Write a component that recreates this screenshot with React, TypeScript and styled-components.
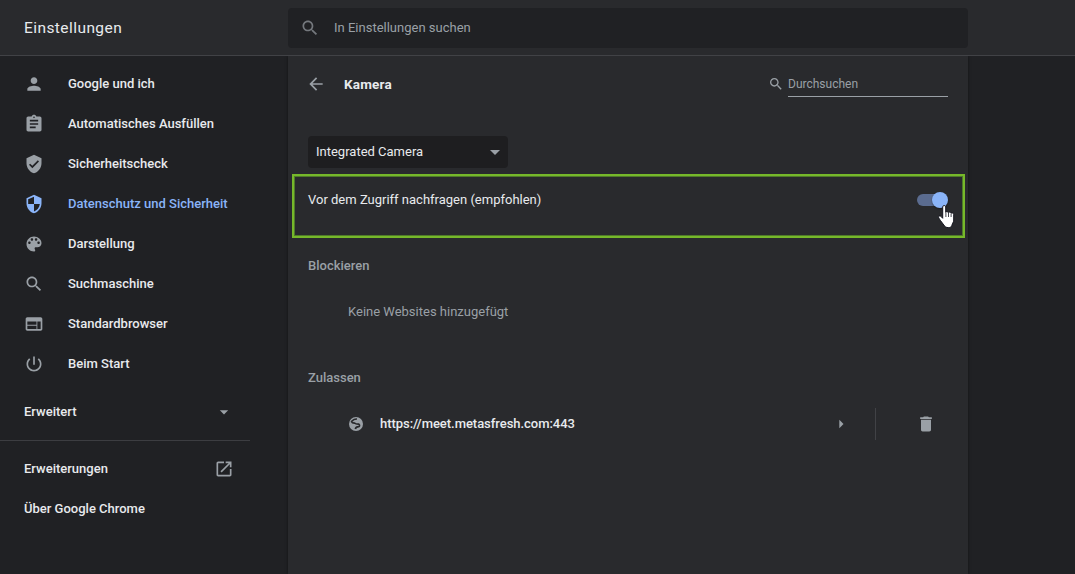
import React from "react";
import styled, { createGlobalStyle } from "styled-components";

const GlobalStyle = createGlobalStyle`
  * { box-sizing: border-box; }
  body {
    margin: 0;
    background: #202124;
    color: #e8eaed;
    font-family: Roboto, "Liberation Sans", sans-serif;
    font-size: 13px;
    line-height: 20px;
    overflow: hidden;
  }
`;

const Page = styled.div`
  display: flex;
  flex-direction: column;
  height: 574px;
  width: 1075px;
`;

const Toolbar = styled.header`
  display: flex;
  align-items: center;
  height: 56px;
  flex: none;
  background: #292a2d;
  border-bottom: 1px solid #414246;
`;

const Title = styled.h1`
  margin: 0;
  width: 288px;
  padding-left: 24px;
  font-size: 15.5px;
  font-weight: 400;
  letter-spacing: 0.43px;
`;

const SearchBox = styled.div`
  display: flex;
  align-items: center;
  width: 680px;
  height: 40px;
  margin-top: 1px;
  padding-left: 12px;
  gap: 14px;
  border-radius: 4px;
  background: #202124;
  color: #9aa0a6;
  svg { color: #74787d; }
`;

const Body = styled.div`
  display: flex;
  flex: 1;
  min-height: 0;
`;

const Sidebar = styled.nav`
  width: 288px;
  padding-top: 8px;
  font-weight: 500;
`;

const NavItem = styled.a<{ $active?: boolean }>`
  display: flex;
  align-items: center;
  height: 40px;
  padding-left: 24px;
  gap: 24px;
  color: ${(p) => (p.$active ? "#8ab4f8" : "#e8eaed")};
  svg { color: ${(p) => (p.$active ? "#8ab4f8" : "#9aa0a6")}; }
`;

const NavFooterItem = styled.a<{ $height: number }>`
  display: flex;
  align-items: center;
  justify-content: space-between;
  width: 234px;
  height: ${(p) => p.$height}px;
  padding-left: 24px;
`;

const NavDivider = styled.div`
  width: 250px;
  height: 1px;
  margin: 0 0 8px;
  background: #3c3d41;
`;

const Panel = styled.main`
  width: 680px;
  background: #292a2d;
  box-shadow: 0 0 3px rgba(0, 0, 0, 0.45);
  clip-path: inset(0 -4px);
`;

const PanelHeader = styled.div`
  display: flex;
  align-items: center;
  height: 56px;
  padding: 0 20px 0 18px;
`;

const PanelTitle = styled.h2`
  flex: 1;
  margin: 0 0 0 18px;
  font-size: 13.5px;
  font-weight: 700;
  letter-spacing: 0.2px;
`;

const FilterField = styled.div`
  width: 160px;
  height: 26px;
  margin-left: 4px;
  padding-top: 3px;
  border-bottom: 1px solid #9aa0a6;
  color: #9aa0a6;
  font-size: 12px;
`;

const Select = styled.div`
  display: flex;
  align-items: center;
  justify-content: space-between;
  width: 200px;
  height: 32px;
  margin: 24px 0 6px 20px;
  padding: 0 1px 0 8px;
  border-radius: 4px;
  background: #1e1e20;
`;

const Highlight = styled.section`
  display: flex;
  align-items: flex-start;
  justify-content: space-between;
  height: 64px;
  margin: 0 3px 0 4px;
  padding: 14px 15px 0 14px;
  border: 2px solid #76b82a;
  box-shadow: inset 0 0 0 1px #4f7a2a;
`;

const Toggle = styled.div`
  position: relative;
  display: flex;
  align-items: center;
  justify-content: flex-end;
  width: 31px;
  height: 16px;
  margin-top: 2px;
`;

const Track = styled.span`
  width: 28px;
  height: 12px;
  margin: 0 -13px 0 0;
  border-radius: 6px;
  background: #5b6c90;
`;

const Knob = styled.span`
  flex: none;
  width: 16px;
  height: 16px;
  z-index: 1;
  border-radius: 50%;
  background: #8ab4f8;
  box-shadow: 0 1px 2px rgba(0, 0, 0, 0.4);
`;

const Pointer = styled.svg`
  position: absolute;
  z-index: 2;
  left: 21px;
  top: 11.5px;
`;

const SectionTitle = styled.h3<{ $top: number }>`
  margin: ${(p) => p.$top}px 0 0 20px;
  font-size: 13px;
  font-weight: 500;
  color: #9aa0a6;
`;

const EmptyNote = styled.p`
  margin: 26px 0 0 60px;
  color: #9aa0a6;
`;

const SiteRow = styled.div`
  display: flex;
  align-items: center;
  height: 48px;
  margin-top: 12px;
  padding: 0 32px 0 60px;
`;

const SiteName = styled.span`
  flex: 1;
  margin-left: 16px;
  font-weight: 500;
  letter-spacing: -0.04px;
`;

const RowDivider = styled.span`
  width: 1px;
  height: 32px;
  margin: 0 40px 0 24px;
  background: #414246;
`;

const paths = {
  person: "M12 12c2.21 0 4-1.79 4-4s-1.79-4-4-4-4 1.79-4 4 1.79 4 4 4zm0 2c-2.67 0-8 1.34-8 4v2h16v-2c0-2.66-5.33-4-8-4z",
  assignment: "M19 3h-4.18C14.4 1.84 13.3 1 12 1c-1.3 0-2.4.84-2.82 2H5c-1.1 0-2 .9-2 2v14c0 1.1.9 2 2 2h14c1.1 0 2-.9 2-2V5c0-1.1-.9-2-2-2zm-7 0c.55 0 1 .45 1 1s-.45 1-1 1-1-.45-1-1 .45-1 1-1zm2 14H7v-2h7v2zm3-4H7v-2h10v2zm0-4H7V7h10v2z",
  verified: "M12 1L3 5v6c0 5.55 3.84 10.74 9 12 5.16-1.26 9-6.45 9-12V5l-9-4zm-2 16l-4-4 1.41-1.41L10 14.17l6.59-6.59L18 9l-8 8z",
  security: "M12 1L3 5v6c0 5.55 3.84 10.74 9 12 5.16-1.26 9-6.45 9-12V5l-9-4zm0 10.99h7c-.53 4.12-3.28 7.79-7 8.94V12H5V6.3l7-3.11v8.8z",
  palette: "M12 3c-4.97 0-9 4.03-9 9s4.03 9 9 9c.83 0 1.5-.67 1.5-1.5 0-.39-.15-.74-.39-1.01-.23-.26-.38-.61-.38-.99 0-.83.67-1.5 1.5-1.5H16c2.76 0 5-2.24 5-5 0-4.42-4.03-8-9-8zm-5.5 9c-.83 0-1.5-.67-1.5-1.5S5.67 9 6.5 9 8 9.67 8 10.5 7.33 12 6.5 12zm3-4C8.67 8 8 7.33 8 6.5S8.67 5 9.5 5s1.5.67 1.5 1.5S10.33 8 9.5 8zm5 0c-.83 0-1.5-.67-1.5-1.5S13.67 5 14.5 5s1.5.67 1.5 1.5S15.33 8 14.5 8zm3 4c-.83 0-1.5-.67-1.5-1.5S16.67 9 17.5 9s1.5.67 1.5 1.5-.67 1.5-1.5 1.5z",
  search: "M15.5 14h-.79l-.28-.27C15.41 12.59 16 11.11 16 9.5 16 5.91 13.09 3 9.5 3S3 5.91 3 9.5 5.91 16 9.5 16c1.61 0 3.09-.59 4.23-1.57l.27.28v.79l5 4.99L20.49 19l-4.99-5zm-6 0C7.01 14 5 11.99 5 9.5S7.01 5 9.5 5 14 7.01 14 9.5 11.99 14 9.5 14z",
  web: "M20 4H4c-1.1 0-1.99.9-1.99 2L2 18c0 1.1.9 2 2 2h16c1.1 0 2-.9 2-2V6c0-1.1-.9-2-2-2zm-5 14H4v-4h11v4zm0-5H4V9h11v4zm5 5h-4V9h4v9z",
  power: "M13 3h-2v10h2V3zm4.83 2.17l-1.42 1.42C17.99 7.86 19 9.81 19 12c0 3.87-3.13 7-7 7s-7-3.13-7-7c0-2.19 1.01-4.14 2.58-5.42L6.17 5.17C4.23 6.82 3 9.26 3 12c0 4.97 4.03 9 9 9s9-4.03 9-9c0-2.74-1.23-5.18-3.17-6.83z",
  down: "M7 10l5 5 5-5z",
  right: "M10 7l5 5-5 5z",
  launch: "M19 19H5V5h7V3H5c-1.11 0-2 .9-2 2v14c0 1.1.89 2 2 2h14c1.1 0 2-.9 2-2v-7h-2v7zM14 3v2h3.59l-9.83 9.83 1.41 1.41L19 6.41V10h2V3h-7z",
  back: "M20 11H7.83l5.59-5.59L12 4l-8 8 8 8 1.41-1.41L7.83 13H20v-2z",
  trash: "M6 19c0 1.1.9 2 2 2h8c1.1 0 2-.9 2-2V7H6v12zM19 4h-3.5l-1-1h-5l-1 1H5v2h14V4z",
};

type IconName = keyof typeof paths;

const IconSvg = styled.svg`
  display: block;
  flex: none;
  fill: currentColor;
  color: #9aa0a6;
`;

const Icon = ({ name, size = 20 }: { name: IconName; size?: number }) => (
  <IconSvg width={size} height={size} viewBox="0 0 24 24">
    <path d={paths[name]} />
  </IconSvg>
);

const Globe = () => (
  <IconSvg width="16" height="16" viewBox="0 0 16 16">
    <circle cx="8" cy="8" r="7" />
    <path
      d="M9 3C6.800 2.900 5 3.600 3.600 5.600c.5 1.400 1.600 1.600 3.200 1.500.6.900 1.700 1.200 4 1.100 1.100.9.900 2-.1 2.500-1.700.1-2.900.4-3.400 2.200"
      fill="none"
      stroke="#292a2d"
      strokeWidth="1.700"
      strokeLinejoin="round"
    />
  </IconSvg>
);

const navItems: { icon: IconName; label: string; active?: boolean }[] = [
  { icon: "person", label: "Google und ich" },
  { icon: "assignment", label: "Automatisches Ausfüllen" },
  { icon: "verified", label: "Sicherheitscheck" },
  { icon: "security", label: "Datenschutz und Sicherheit", active: true },
  { icon: "palette", label: "Darstellung" },
  { icon: "search", label: "Suchmaschine" },
  { icon: "web", label: "Standardbrowser" },
  { icon: "power", label: "Beim Start" },
];

export default function App() {
  return (
    <Page>
      <GlobalStyle />
      <Toolbar>
        <Title>Einstellungen</Title>
        <SearchBox>
          <Icon name="search" />
          In Einstellungen suchen
        </SearchBox>
      </Toolbar>
      <Body>
        <Sidebar>
          {navItems.map((item) => (
            <NavItem key={item.label} $active={item.active}>
              <Icon name={item.icon} />
              {item.label}
            </NavItem>
          ))}
          <NavFooterItem $height={56}>
            Erweitert
            <Icon name="down" />
          </NavFooterItem>
          <NavDivider />
          <NavFooterItem $height={40}>
            Erweiterungen
            <Icon name="launch" />
          </NavFooterItem>
          <NavFooterItem $height={40}>Über Google Chrome</NavFooterItem>
        </Sidebar>
        <Panel>
          <PanelHeader>
            <Icon name="back" />
            <PanelTitle>Kamera</PanelTitle>
            <Icon name="search" size={16} />
            <FilterField>Durchsuchen</FilterField>
          </PanelHeader>
          <Select>
            Integrated Camera
            <Icon name="down" size={24} />
          </Select>
          <Highlight>
            Vor dem Zugriff nachfragen (empfohlen)
            <Toggle>
              <Track />
              <Knob />
              <Pointer width="18" height="26" viewBox="0 0 18 26">
                <path
                  d="M4.700 2.800C4.700 1.100 7.700 1.100 7.700 2.800V8.300c.3-1 2.500-.9 2.700.4.400-1 2.400-.7 2.600.7.500-.8 2.700-.5 2.700 1.200v5.500c0 2-1.300 3-1.800 5.200-.5 1.600-1.500 2.300-3.500 2.300-2.200 0-3.500-.8-4.500-2.500L2.300 16.300C1 14.300 0 13.100.8 12.300c1-.9 2.500 0 3.900 2z"
                  fill="#fff"
                  stroke="#15161f"
                  strokeWidth="1"
                />
                <path d="M7.900 8.500v4.500M10.500 9V13M13.100 10V13" stroke="#15161f" strokeWidth="0.8" />
              </Pointer>
            </Toggle>
          </Highlight>
          <SectionTitle $top={18}>Blockieren</SectionTitle>
          <EmptyNote>Keine Websites hinzugefügt</EmptyNote>
          <SectionTitle $top={46}>Zulassen</SectionTitle>
          <SiteRow>
            <Globe />
            <SiteName>https://meet.metasfresh.com:443</SiteName>
            <Icon name="right" size={20} />
            <RowDivider />
            <Icon name="trash" />
          </SiteRow>
        </Panel>
      </Body>
    </Page>
  );
}
